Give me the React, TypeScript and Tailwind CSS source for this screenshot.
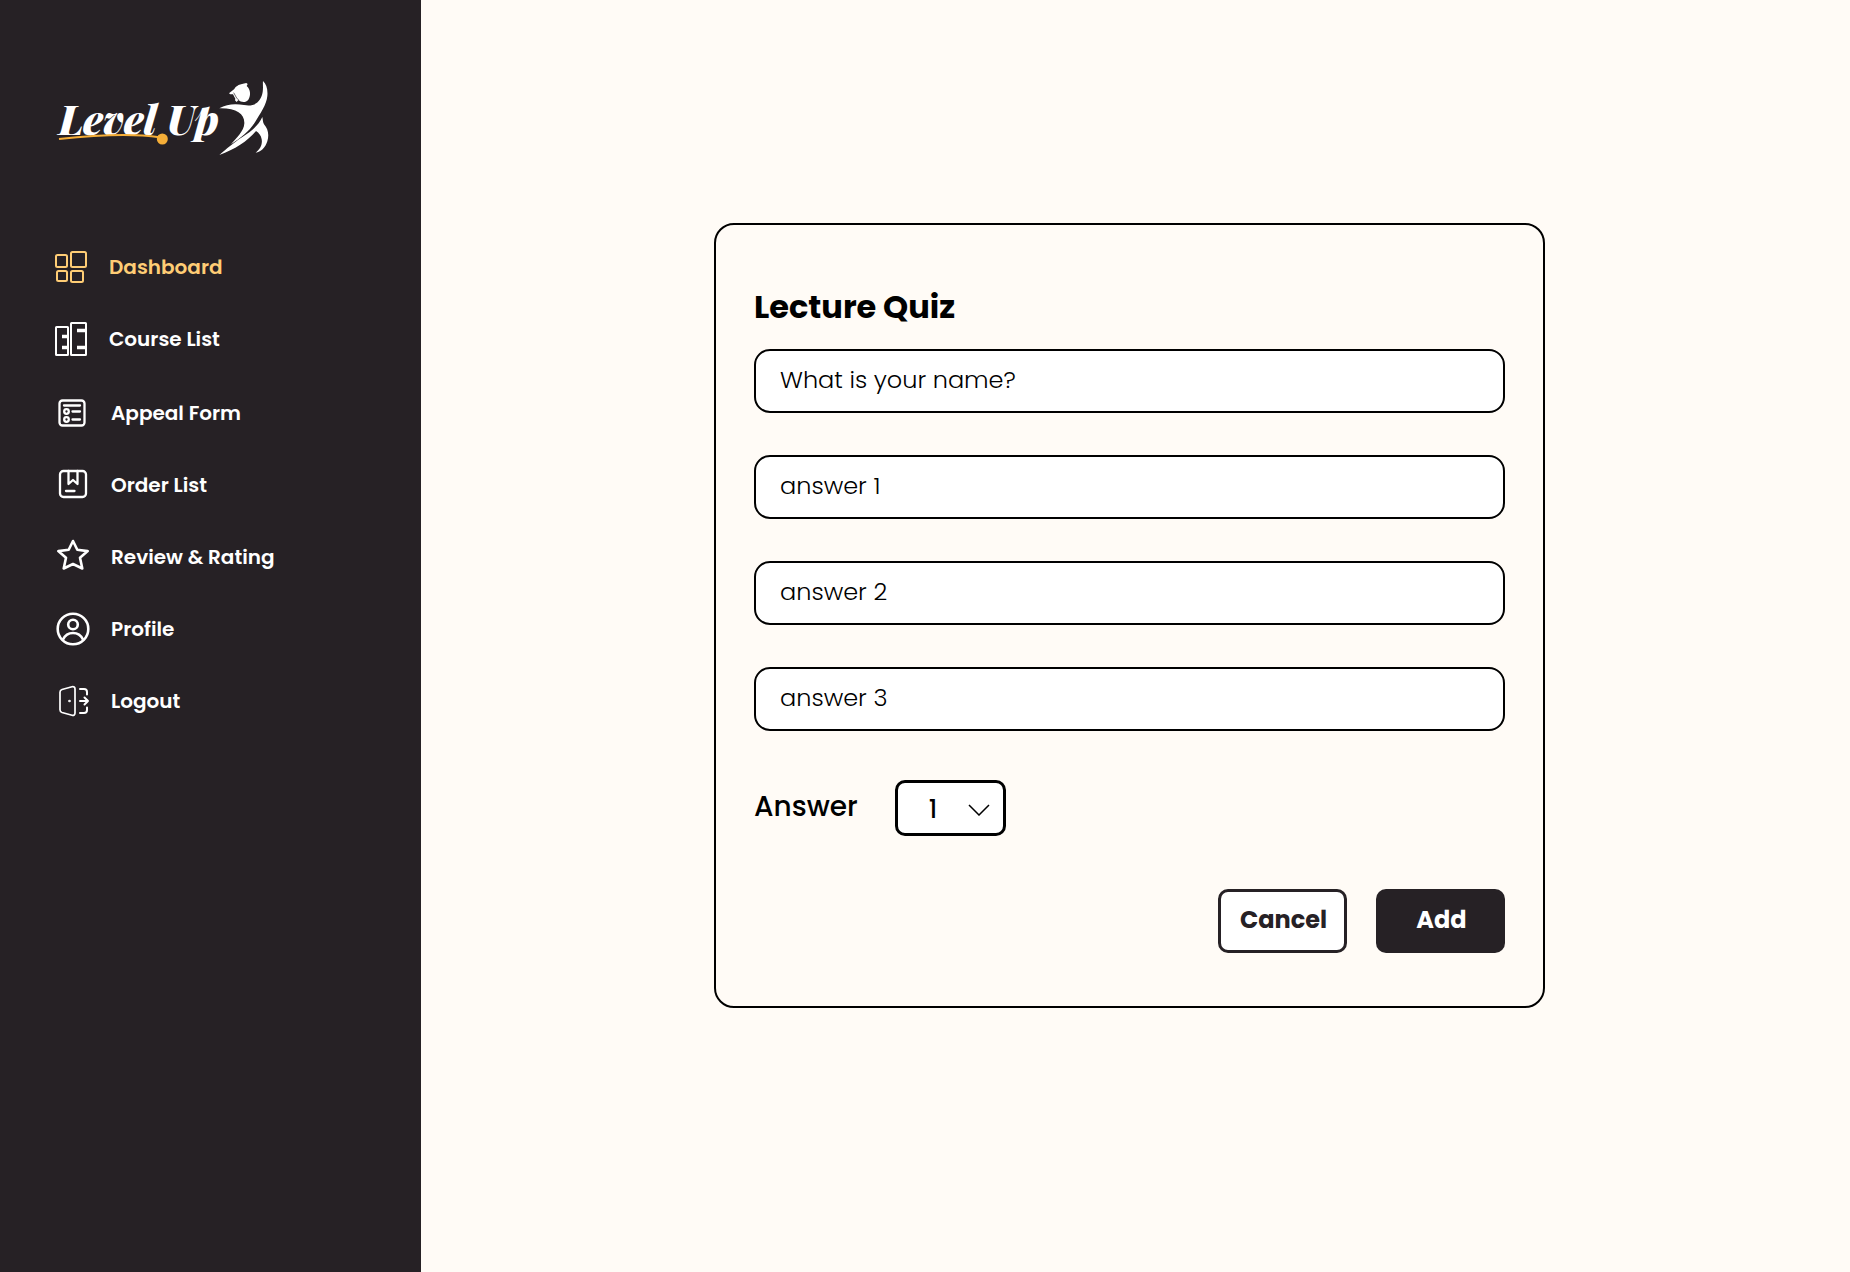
import { useState, type ReactNode } from "react";

function Logo() {
  return (
    <svg viewBox="0 0 750 300" className="h-[100px] w-[250px]" role="img" aria-label="Level Up">
      <g
        fill="#fff"
        fontFamily="'Playfair Display', 'Liberation Serif', serif"
        fontWeight="900"
        fontStyle="italic"
        fontSize="120"
      >
        <text x="56" y="194">Level</text>
        <text x="380" y="194">Up</text>
      </g>
      <path d="M57 207C130 199 270 188 358 202" fill="none" stroke="#f5ae38" strokeWidth="6" />
      <circle cx="367" cy="207" r="16.5" fill="#f5ae38" />
      <g fill="#fff">
        <path d="M567 70L583 57C588 47 600 42 619 39L623 42L620 48C631 57 634 76 625 89C618 98 604 98 595 90L590 96L585 91L586 86L579 73L571 73Z" />
        <path d="M538 115C560 102 585 100 612 105C646 112 664 92 668 66C670 53 668 42 669 33C679 42 684 58 682 78C680 104 660 132 644 158C626 186 600 204 573 223C590 202 612 184 613 160C614 132 590 114 538 115Z" />
        <path d="M667 141C669 149 668 156 672 163C684 176 688 194 682 214C676 234 662 246 647 248C660 238 668 224 665 208C663 196 657 189 648 183C622 214 584 238 538 255C558 238 584 216 606 202C634 184 654 168 667 141Z" />
      </g>
      <path d="M581 68L590 84L596 90" fill="none" stroke="#262125" strokeWidth="2" />
    </svg>
  );
}

function Icon({ children, width = 2 }: { children: ReactNode; width?: number }) {
  return (
    <svg
      viewBox="0 0 36 36"
      className="size-9 shrink-0"
      fill="none"
      stroke="currentColor"
      strokeWidth={width}
      strokeLinecap="round"
      strokeLinejoin="round"
      aria-hidden="true"
    >
      {children}
    </svg>
  );
}

const pages = [
  {
    label: "Dashboard",
    icon: (
      <Icon>
        <rect x="3" y="6" width="11" height="12" rx="1.5" />
        <rect x="18" y="3" width="15" height="15" rx="1.5" />
        <rect x="4" y="22" width="10" height="10" rx="1.5" />
        <rect x="18" y="22" width="12" height="11" rx="1.5" />
      </Icon>
    ),
  },
  {
    label: "Course List",
    icon: (
      <Icon>
        <rect x="3" y="6" width="12" height="28" rx="0.5" />
        <rect x="18" y="2" width="15" height="32" rx="0.5" />
        <path d="M9 15.500h5M9 26.500h5M24 9.500h8M24 26.500h8" strokeWidth="3.500" strokeLinecap="butt" />
      </Icon>
    ),
  },
];

const account = [
  {
    label: "Appeal Form",
    icon: (
      <Icon width={2.3}>
        <rect x="4.500" y="5.500" width="25" height="25" rx="3" />
        <path d="M9 10.500h16M17.500 16.500h7.500M17.500 24.500h7.500" />
        <circle cx="11.500" cy="16.500" r="2.300" />
        <circle cx="11.500" cy="24.500" r="2.300" />
      </Icon>
    ),
  },
  {
    label: "Order List",
    icon: (
      <Icon width={2.3}>
        <rect x="5" y="4" width="26" height="26" rx="3.500" />
        <path d="M13.500 4v13l4.500-4 4.500 4V4M11 24h8.500" />
      </Icon>
    ),
  },
  {
    label: "Review & Rating",
    icon: (
      <Icon width={2.6}>
        <path d="M18 2l4.300 8.800 10.400 1.300-7.700 6.600 2.300 10.800-9.300-4.500-9.300 4.500L11 18.700 3.300 12.100l10.400-1.300z" />
      </Icon>
    ),
  },
  {
    label: "Profile",
    icon: (
      <Icon width={2.6}>
        <circle cx="18" cy="18" r="15.300" />
        <circle cx="18" cy="13.500" r="4.800" />
        <path d="M8 28.500c2-4.300 5.500-6.500 10-6.500s8 2.200 10 6.500" />
      </Icon>
    ),
  },
  {
    label: "Logout",
    icon: (
      <Icon width={1.7}>
        <path d="M7 6.500l10-2.800c1.800-.500 3 .500 3 2.200v24.200c0 1.700-1.200 2.700-3 2.200l-10-2.800c-1.300-.400-2-1.300-2-2.700V9.200c0-1.400.700-2.300 2-2.700z" />
        <circle cx="14.500" cy="18" r="0.500" fill="currentColor" />
        <path d="M25 6h4c2 0 3 1 3 3v2.500M25 30h4c2 0 3-1 3-3v-2.500M25 18h8M29.500 14.500l3.500 3.500-3.500 3.500" strokeWidth="2" />
      </Icon>
    ),
  },
];

function NavItem({ label, icon, active = false }: { label: string; icon: ReactNode; active?: boolean }) {
  return (
    <li>
      <a
        href="#"
        aria-current={active ? "page" : undefined}
        className={`flex h-10 items-center gap-5 ${active ? "text-[#ffcd75]" : "text-white"}`}
      >
        {icon}
        {label}
      </a>
    </li>
  );
}

export default function App() {
  const [texts, setTexts] = useState(["What is your name?", "answer 1", "answer 2", "answer 3"]);

  return (
    <div className="flex min-h-screen bg-[#fffbf6] font-['Poppins','Inter',sans-serif] text-black">
      <aside className="w-[421px] shrink-0 bg-[#262125] pt-[70px]">
        <div className="pl-10">
          <Logo />
        </div>
        <nav className="mt-[77px] text-xl font-semibold">
          <ul className="flex flex-col gap-8 pl-[53px]">
            {pages.map((p) => (
              <NavItem key={p.label} {...p} active={p.label === "Dashboard"} />
            ))}
          </ul>
          <ul className="mt-[34px] flex flex-col gap-8 pl-[55px]">
            {account.map((p) => (
              <NavItem key={p.label} {...p} />
            ))}
          </ul>
        </nav>
      </aside>

      <main className="flex flex-1 items-start justify-center pt-[223px] pr-3">
        <form
          onSubmit={(e) => e.preventDefault()}
          className="w-full max-w-[831px] rounded-[20px] border-2 border-black px-[38px] pt-[58px] pb-[53px]"
        >
          <h1 className="text-[32px] leading-12 font-bold">Lecture Quiz</h1>
          <div className="mt-[18px] flex flex-col gap-[42px]">
            {texts.map((text, i) => (
              <input
                key={i}
                type="text"
                aria-label={i === 0 ? "Question" : `Answer ${i}`}
                value={text}
                onChange={(e) => setTexts(texts.map((t, j) => (j === i ? e.target.value : t)))}
                className="h-16 w-full rounded-2xl border-2 border-black bg-white px-6 pb-1 text-2xl font-light"
              />
            ))}
          </div>

          <div className="mt-[49px] flex items-center gap-[37px]">
            <label htmlFor="correct" className="pb-0.5 text-[28px] leading-10 font-medium">
              Answer
            </label>
            <div className="relative">
              <select
                id="correct"
                className="h-14 w-[111px] appearance-none rounded-[10px] border-3 border-black bg-white pt-1 pl-[31px] text-2xl font-medium"
              >
                <option>1</option>
                <option>2</option>
                <option>3</option>
              </select>
              <svg
                viewBox="0 0 22 12"
                className="pointer-events-none absolute top-6 right-4 h-3 w-[22px]"
                fill="none"
                stroke="#000"
                strokeWidth="1.500"
                aria-hidden="true"
              >
                <path d="M1 1l10 10L21 1" />
              </svg>
            </div>
          </div>

          <div className="mt-[53px] flex justify-end gap-[29px] text-2xl font-bold">
            <button
              type="button"
              className="h-16 w-[129px] rounded-[10px] border-3 border-[#262125] bg-white pb-0.5 pl-0.5 text-[#262125]"
            >
              Cancel
            </button>
            <button type="submit" className="h-16 w-[129px] rounded-[10px] bg-[#262125] pb-0.5 pl-0.5 text-white">
              Add
            </button>
          </div>
        </form>
      </main>
    </div>
  );
}
